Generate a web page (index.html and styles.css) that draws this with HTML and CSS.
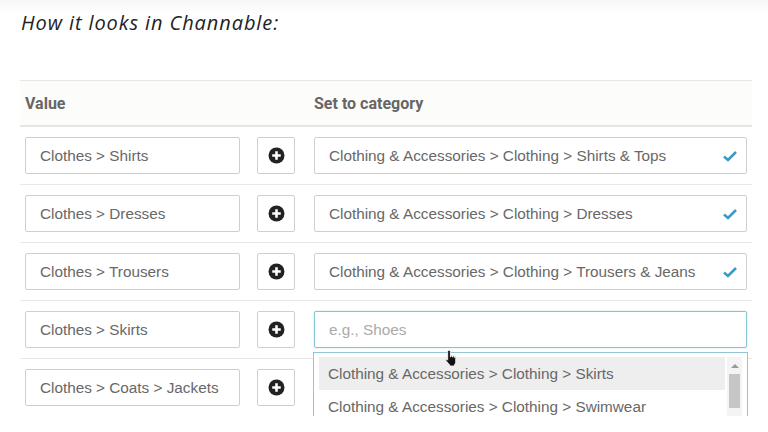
FILE: index.html
```html
<!DOCTYPE html>
<html>
<head>
<meta charset="utf-8">
<link rel="stylesheet" href="styles.css">
</head>
<body>
<div class="page">
  <h1 class="title">How it looks in Channable:</h1>
  <div class="table">
    <div class="head">
      <div class="hcell hval">Value</div>
      <div class="hcell hcat">Set to category</div>
    </div>
    <div class="row">
      <div class="box val">Clothes &gt; Shirts</div>
      <div class="plus"><svg width="17" height="17" viewBox="0 0 16 16"><circle cx="8" cy="8" r="7.5" fill="#222"/><path d="M8 4v8M4 8h8" stroke="#fff" stroke-width="2.4"/></svg></div>
      <div class="box cat">Clothing &amp; Accessories &gt; Clothing &gt; Shirts &amp; Tops<svg class="check" width="16" height="12" viewBox="0 0 16 12"><path d="M2 6.5l4 3.5 8-8" fill="none" stroke="#3a9cc6" stroke-width="2.6"/></svg></div>
    </div>
    <div class="row">
      <div class="box val">Clothes &gt; Dresses</div>
      <div class="plus"><svg width="17" height="17" viewBox="0 0 16 16"><circle cx="8" cy="8" r="7.5" fill="#222"/><path d="M8 4v8M4 8h8" stroke="#fff" stroke-width="2.4"/></svg></div>
      <div class="box cat">Clothing &amp; Accessories &gt; Clothing &gt; Dresses<svg class="check" width="16" height="12" viewBox="0 0 16 12"><path d="M2 6.5l4 3.5 8-8" fill="none" stroke="#3a9cc6" stroke-width="2.6"/></svg></div>
    </div>
    <div class="row">
      <div class="box val">Clothes &gt; Trousers</div>
      <div class="plus"><svg width="17" height="17" viewBox="0 0 16 16"><circle cx="8" cy="8" r="7.5" fill="#222"/><path d="M8 4v8M4 8h8" stroke="#fff" stroke-width="2.4"/></svg></div>
      <div class="box cat">Clothing &amp; Accessories &gt; Clothing &gt; Trousers &amp; Jeans<svg class="check" width="16" height="12" viewBox="0 0 16 12"><path d="M2 6.5l4 3.5 8-8" fill="none" stroke="#3a9cc6" stroke-width="2.6"/></svg></div>
    </div>
    <div class="row">
      <div class="box val">Clothes &gt; Skirts</div>
      <div class="plus"><svg width="17" height="17" viewBox="0 0 16 16"><circle cx="8" cy="8" r="7.5" fill="#222"/><path d="M8 4v8M4 8h8" stroke="#fff" stroke-width="2.4"/></svg></div>
      <div class="catwrap">
        <div class="box cat focus"><span class="ph">e.g., Shoes</span></div>
        <div class="dropdown">
          <div class="items">
            <div class="item active">Clothing &amp; Accessories &gt; Clothing &gt; Skirts</div>
            <div class="item">Clothing &amp; Accessories &gt; Clothing &gt; Swimwear</div>
          </div>
          <div class="scroll">
            <div class="arrow"></div>
            <div class="thumb"></div>
          </div>
        </div>
        <svg class="cursor" width="16" height="18" viewBox="0 0 16 18"><path d="M5 1.2c.8 0 1.4.6 1.4 1.4V8h.5V6.8c0-.8 1.3-.8 1.3 0V8h.5V7.3c0-.8 1.3-.8 1.3 0V8.4h.4V8c0-.8 1.3-.8 1.3 0v4.6c0 1.6-.8 2.6-1.2 3.2V17H5.6v-1.2C4.4 14.6 2.6 12.6 2 11.6c-.5-.9.4-1.6 1.2-1l.5.6V2.6C3.6 1.800 4.2 1.2 5 1.2z" fill="#111" stroke="#fff" stroke-width=".8"/></svg>
      </div>
    </div>
    <div class="row">
      <div class="box val">Clothes &gt; Coats &gt; Jackets</div>
      <div class="plus"><svg width="17" height="17" viewBox="0 0 16 16"><circle cx="8" cy="8" r="7.5" fill="#222"/><path d="M8 4v8M4 8h8" stroke="#fff" stroke-width="2.4"/></svg></div>
      <div class="box cat"></div>
    </div>
  </div>
</div>
</body>
</html>
```
FILE: styles.css
```css
html, body {
  margin: 0;
  padding: 0;
  background: #fff;
}
.page {
  width: 768px;
  height: 432px;
  overflow: hidden;
  background: linear-gradient(#f6f6f6, #fff 14px);
}
.title {
  margin: 0;
  padding: 9px 0 0 21px;
  height: 80px;
  box-sizing: border-box;
  font-family: "Open Sans", sans-serif;
  font-style: italic;
  font-weight: 400;
  font-size: 20px;
  line-height: 28px;
  color: #222;
  letter-spacing: 0.9px;
}
.table {
  margin-left: 20px;
  width: 732px;
  height: 335px;
  overflow: hidden;
  border-top: 1px solid #e6e6e4;
  font-family: "Liberation Sans", Arial, sans-serif;
}
.head {
  display: flex;
  align-items: center;
  height: 44px;
  background: #fcfcfa;
  border-bottom: 2px solid #e6e6e4;
}
.hcell {
  font-family: Roboto, sans-serif;
  font-weight: 700;
  font-size: 16px;
  color: #666;
}
.hval {
  padding-left: 5px;
  width: 289px;
}
.row {
  display: flex;
  align-items: flex-start;
  height: 58px;
  padding-top: 10px;
  box-sizing: border-box;
  border-bottom: 1px solid #e8e8e8;
  padding-left: 5px;
}
.box {
  height: 37px;
  box-sizing: border-box;
  border: 1px solid #cfcfcf;
  border-radius: 2px;
  background: #fff;
  display: flex;
  align-items: center;
  padding-left: 14px;
  font-size: 15.3px;
  color: #686868;
  white-space: nowrap;
}
.val {
  width: 215px;
}
.plus {
  width: 38px;
  height: 37px;
  box-sizing: border-box;
  margin-left: 17px;
  border: 1px solid #cfcfcf;
  border-radius: 2px;
  display: flex;
  align-items: center;
  justify-content: center;
}
.cat {
  width: 433px;
  margin-left: 19px;
  position: relative;
}
.check {
  position: absolute;
  right: 8px;
  top: 12px;
}
.catwrap {
  margin-left: 19px;
  position: relative;
}
.catwrap .cat {
  margin-left: 0;
}
.focus {
  border-color: #86c6d2;
  box-shadow: 0 0 2px rgba(100, 180, 200, 0.4);
}
.ph {
  color: #aaa;
}
.dropdown {
  position: absolute;
  left: -1px;
  top: 41px;
  width: 435px;
  height: 100px;
  box-sizing: border-box;
  border: 1px solid #8fc7d3;
  background: #fff;
  display: flex;
  padding: 4px 5px 0 5px;
  z-index: 2;
}
.items {
  flex: 1;
}
.item {
  height: 33px;
  line-height: 33px;
  padding-left: 9px;
  font-size: 15.3px;
  color: #686868;
  white-space: nowrap;
}
.item.active {
  background: #eeeeee;
}
.scroll {
  width: 15px;
  background: #f4f4f4;
  margin-left: 2px;
  display: flex;
  flex-direction: column;
  align-items: center;
}
.arrow {
  width: 0;
  height: 0;
  border-left: 4px solid transparent;
  border-right: 4px solid transparent;
  border-bottom: 4px solid #999;
  margin-top: 7px;
}
.thumb {
  width: 11px;
  height: 34px;
  margin-top: 6px;
  background: #c6c6c6;
}
.cursor {
  position: absolute;
  left: 130px;
  top: 38px;
  z-index: 3;
}
```
